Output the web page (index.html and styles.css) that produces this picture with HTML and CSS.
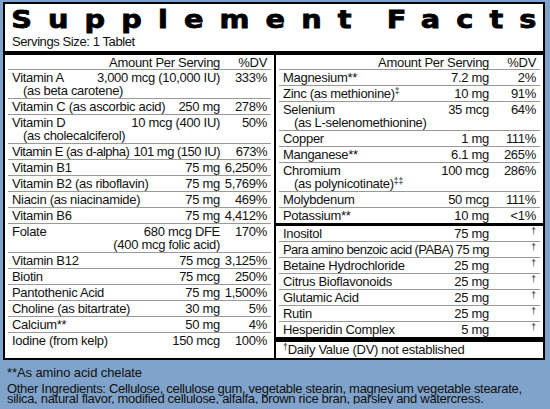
FILE: index.html
```html
<!DOCTYPE html>
<html lang="en">
<head>
  <meta charset="UTF-8">
  <title>Supplement Facts</title>
  <link rel="stylesheet" href="styles.css">
</head>
<body>
  <div class="label">
    <h1 class="title">Supplement Fact<span class="end">s</span></h1>
    <div class="serving">Servings Size: 1 Tablet</div>
    <div class="bar-top"></div>

    <div class="facts">
      <div class="col">
        <div class="row head"><div></div><div class="amt">Amount Per Serving</div><div class="dv">%DV</div></div>
        <div class="row"><div class="name">Vitamin A<span class="sub">(as beta carotene)</span></div><div class="amt">3,000 mcg (10,000 IU)</div><div class="dv">333%</div></div>
        <div class="row"><div class="name">Vitamin C (as ascorbic acid)</div><div class="amt">250 mg</div><div class="dv">278%</div></div>
        <div class="row"><div class="name">Vitamin D<span class="sub">(as cholecalciferol)</span></div><div class="amt">10 mcg (400 IU)</div><div class="dv">50%</div></div>
        <div class="row tight"><div class="name">Vitamin E (as d-alpha)</div><div class="amt">101 mg (150 IU)</div><div class="dv">673%</div></div>
        <div class="row"><div class="name">Vitamin B1</div><div class="amt">75 mg</div><div class="dv">6,250%</div></div>
        <div class="row"><div class="name">Vitamin B2 (as riboflavin)</div><div class="amt">75 mg</div><div class="dv">5,769%</div></div>
        <div class="row"><div class="name">Niacin (as niacinamide)</div><div class="amt">75 mg</div><div class="dv">469%</div></div>
        <div class="row"><div class="name">Vitamin B6</div><div class="amt">75 mg</div><div class="dv">4,412%</div></div>
        <div class="row"><div class="name">Folate</div><div class="amt">680 mcg DFE<span class="line">(400 mcg folic acid)</span></div><div class="dv">170%</div></div>
        <div class="row"><div class="name">Vitamin B12</div><div class="amt">75 mcg</div><div class="dv">3,125%</div></div>
        <div class="row"><div class="name">Biotin</div><div class="amt">75 mcg</div><div class="dv">250%</div></div>
        <div class="row"><div class="name">Pantothenic Acid</div><div class="amt">75 mg</div><div class="dv">1,500%</div></div>
        <div class="row"><div class="name">Choline (as bitartrate)</div><div class="amt">30 mg</div><div class="dv">5%</div></div>
        <div class="row"><div class="name">Calcium**</div><div class="amt">50 mg</div><div class="dv">4%</div></div>
        <div class="row last"><div class="name">Iodine (from kelp)</div><div class="amt">150 mcg</div><div class="dv">100%</div></div>
      </div>

      <div class="col">
        <div class="row head"><div></div><div class="amt">Amount Per Serving</div><div class="dv">%DV</div></div>
        <div class="row"><div class="name">Magnesium**</div><div class="amt">7.2 mg</div><div class="dv">2%</div></div>
        <div class="row"><div class="name">Zinc (as methionine)<span class="mark">‡</span></div><div class="amt">10 mg</div><div class="dv">91%</div></div>
        <div class="row"><div class="name">Selenium<span class="sub">(as L-selenomethionine)</span></div><div class="amt">35 mcg</div><div class="dv">64%</div></div>
        <div class="row"><div class="name">Copper</div><div class="amt">1 mg</div><div class="dv">111%</div></div>
        <div class="row"><div class="name">Manganese**</div><div class="amt">6.1 mg</div><div class="dv">265%</div></div>
        <div class="row"><div class="name">Chromium<span class="sub">(as polynicotinate)<span class="mark">‡‡</span></span></div><div class="amt">100 mcg</div><div class="dv">286%</div></div>
        <div class="row"><div class="name">Molybdenum</div><div class="amt">50 mcg</div><div class="dv">111%</div></div>
        <div class="row last"><div class="name">Potassium**</div><div class="amt">10 mg</div><div class="dv">&lt;1%</div></div>
        <div class="bar-thin"></div>
        <div class="row"><div class="name">Inositol</div><div class="amt">75 mg</div><div class="dv"><span class="mark">†</span></div></div>
        <div class="row tighter"><div class="name">Para amino benzoic acid (PABA)</div><div class="amt">75 mg</div><div class="dv"><span class="mark">†</span></div></div>
        <div class="row"><div class="name">Betaine Hydrochloride</div><div class="amt">25 mg</div><div class="dv"><span class="mark">†</span></div></div>
        <div class="row"><div class="name">Citrus Bioflavonoids</div><div class="amt">25 mg</div><div class="dv"><span class="mark">†</span></div></div>
        <div class="row"><div class="name">Glutamic Acid</div><div class="amt">25 mg</div><div class="dv"><span class="mark">†</span></div></div>
        <div class="row"><div class="name">Rutin</div><div class="amt">25 mg</div><div class="dv"><span class="mark">†</span></div></div>
        <div class="row last"><div class="name">Hesperidin Complex</div><div class="amt">5 mg</div><div class="dv"><span class="mark">†</span></div></div>
        <div class="bar-thick"></div>
        <div class="dv-note"><span class="mark">†</span>Daily Value (DV) not established</div>
      </div>
    </div>
  </div>

  <div class="notes">
    <div class="chelate">**As amino acid chelate</div>
    <div class="ingredients">Other Ingredients: Cellulose, cellulose gum, vegetable stearin, magnesium vegetable stearate, silica, natural flavor, modified cellulose, alfalfa, brown rice bran, parsley and watercress.</div>
  </div>
</body>
</html>
```

FILE: styles.css
```css
body {
  margin: 0;
  background: #7fa3ca;
  font-family: 'Liberation Sans', Arial, sans-serif;
  color: #111;
}
.label {
  margin: 2px 5px 0 3px;
  border: 2px solid #000;
  background: #fff;
}
.title {
  width: max-content;
  margin: 0;
  padding: 3px 0 0 7px;
  font-family: 'DejaVu Sans', sans-serif;
  font-weight: bold;
  font-size: 25px;
  line-height: 26px;
  letter-spacing: 14px;
  word-spacing: -6px;
  -webkit-text-stroke: 0.8px #000;
  color: #000;
  white-space: nowrap;
  transform: scaleX(1.15);
  transform-origin: 12px 0;
}
.title .end {
  letter-spacing: 0;
}
.serving {
  margin-top: 2px;
  padding-left: 7px;
  font-size: 13px;
  line-height: 14px;
  letter-spacing: -0.4px;
}
.bar-top {
  height: 4px;
  margin-top: 2px;
  background: #000;
}
.facts {
  display: grid;
  grid-template-columns: 1fr 1fr;
}
.col + .col {
  border-left: 2px solid #000;
}
.row {
  display: grid;
  grid-template-columns: minmax(0, 1fr) auto 47px;
  margin: 0 3px;
  padding: 1px 4px;
  font-size: 13px;
  line-height: 13px;
  letter-spacing: -0.3px;
  white-space: nowrap;
  border-bottom: 1px solid #999;
}
.row.tight {
  letter-spacing: -0.5px;
}
.row.tighter {
  letter-spacing: -0.6px;
}
.row.head {
  padding-bottom: 0;
}
.row.last {
  border-bottom: none;
}
.amt,
.dv {
  text-align: right;
}
.sub {
  display: block;
  padding-left: 11px;
}
.line {
  display: block;
}
.mark {
  font-size: 8.5px;
  line-height: 0;
  vertical-align: 4px;
  letter-spacing: 0;
}
.bar-thin {
  height: 3px;
  background: #000;
}
.bar-thick {
  height: 5px;
  background: #000;
}
.dv-note {
  padding: 1px 7px 2px;
  font-size: 13px;
  line-height: 13px;
  letter-spacing: -0.3px;
}
.notes {
  padding: 0 7px;
  font-size: 13px;
}
.chelate {
  margin-top: 5px;
  line-height: 15px;
  letter-spacing: -0.1px;
}
.ingredients {
  margin-top: 4px;
  line-height: 10px;
  letter-spacing: -0.3px;
}
```
